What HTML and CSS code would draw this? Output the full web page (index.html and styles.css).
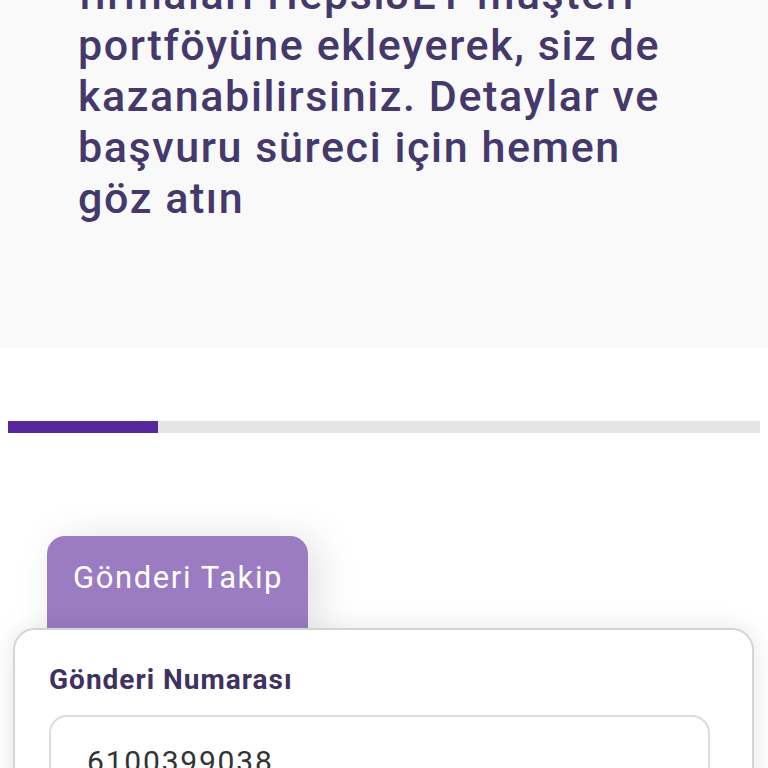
FILE: index.html
```html
<!DOCTYPE html>
<html lang="tr">
<head>
<meta charset="utf-8">
<title>HepsiJET</title>
<link rel="stylesheet" href="styles.css">
</head>
<body>
<section class="hero">
  <p class="hero-text">firmaları HepsiJET müşteri portföyüne ekleyerek, siz de kazanabilirsiniz. Detaylar ve başvuru süreci için hemen göz atın</p>
</section>
<div class="progress"><div class="progress-fill" style="width:20%"></div></div>
<section class="tracking">
  <div class="tab">Gönderi Takip</div>
  <div class="card">
    <label class="label">Gönderi Numarası</label>
    <div class="input">6100399038</div>
  </div>
</section>
</body>
</html>
```
FILE: styles.css
```css
html, body {
  margin: 0;
  padding: 0;
  background: #ffffff;
  font-family: Roboto, "Noto Sans", sans-serif;
  overflow: hidden;
  height: 768px;
}
.hero {
  background: #f9f9fa;
  height: 348px;
  padding: 0 70px 0 78px;
  box-sizing: border-box;
  overflow: hidden;
}
.hero-text {
  margin: -31px 0 0;
  font-size: 43px;
  line-height: 51px;
  letter-spacing: 1.6px;
  font-weight: 500;
  color: #45386a;
}
.progress {
  margin: 73px 8px 0;
  height: 12px;
  background: #e5e5e5;
}
.progress-fill {
  height: 100%;
  background: #56289c;
}
.tracking {
  margin-top: 103px;
  padding: 0 14px 0 13px;
}
.tab {
  margin-left: 34px;
  width: 261px;
  height: 92px;
  box-sizing: border-box;
  padding: 23px 0 0 26px;
  background: #9b7cc3;
  color: #ffffff;
  font-size: 31px;
  letter-spacing: 1.6px;
  font-weight: 400;
  border-radius: 18px 18px 0 0;
  box-shadow: 10px 4px 40px rgba(0,0,0,0.13);
}
.card {
  position: relative;
  background: #ffffff;
  border: 2px solid #d4d4d6;
  border-radius: 22px;
  box-shadow: 0 0 26px rgba(0,0,0,0.10);
  padding: 35px 42px 40px 34px;
  height: 300px;
}
.label {
  display: block;
  font-size: 28px;
  letter-spacing: 1px;
  font-weight: 700;
  color: #3f325f;
  line-height: 30px;
}
.input {
  margin-top: 20px;
  border: 2px solid #dcdcde;
  border-radius: 18px;
  height: 80px;
  padding: 30px 36px 0;
  box-sizing: border-box;
  font-size: 30px;
  letter-spacing: 1.8px;
  color: #333333;
  line-height: 30px;
}
```
